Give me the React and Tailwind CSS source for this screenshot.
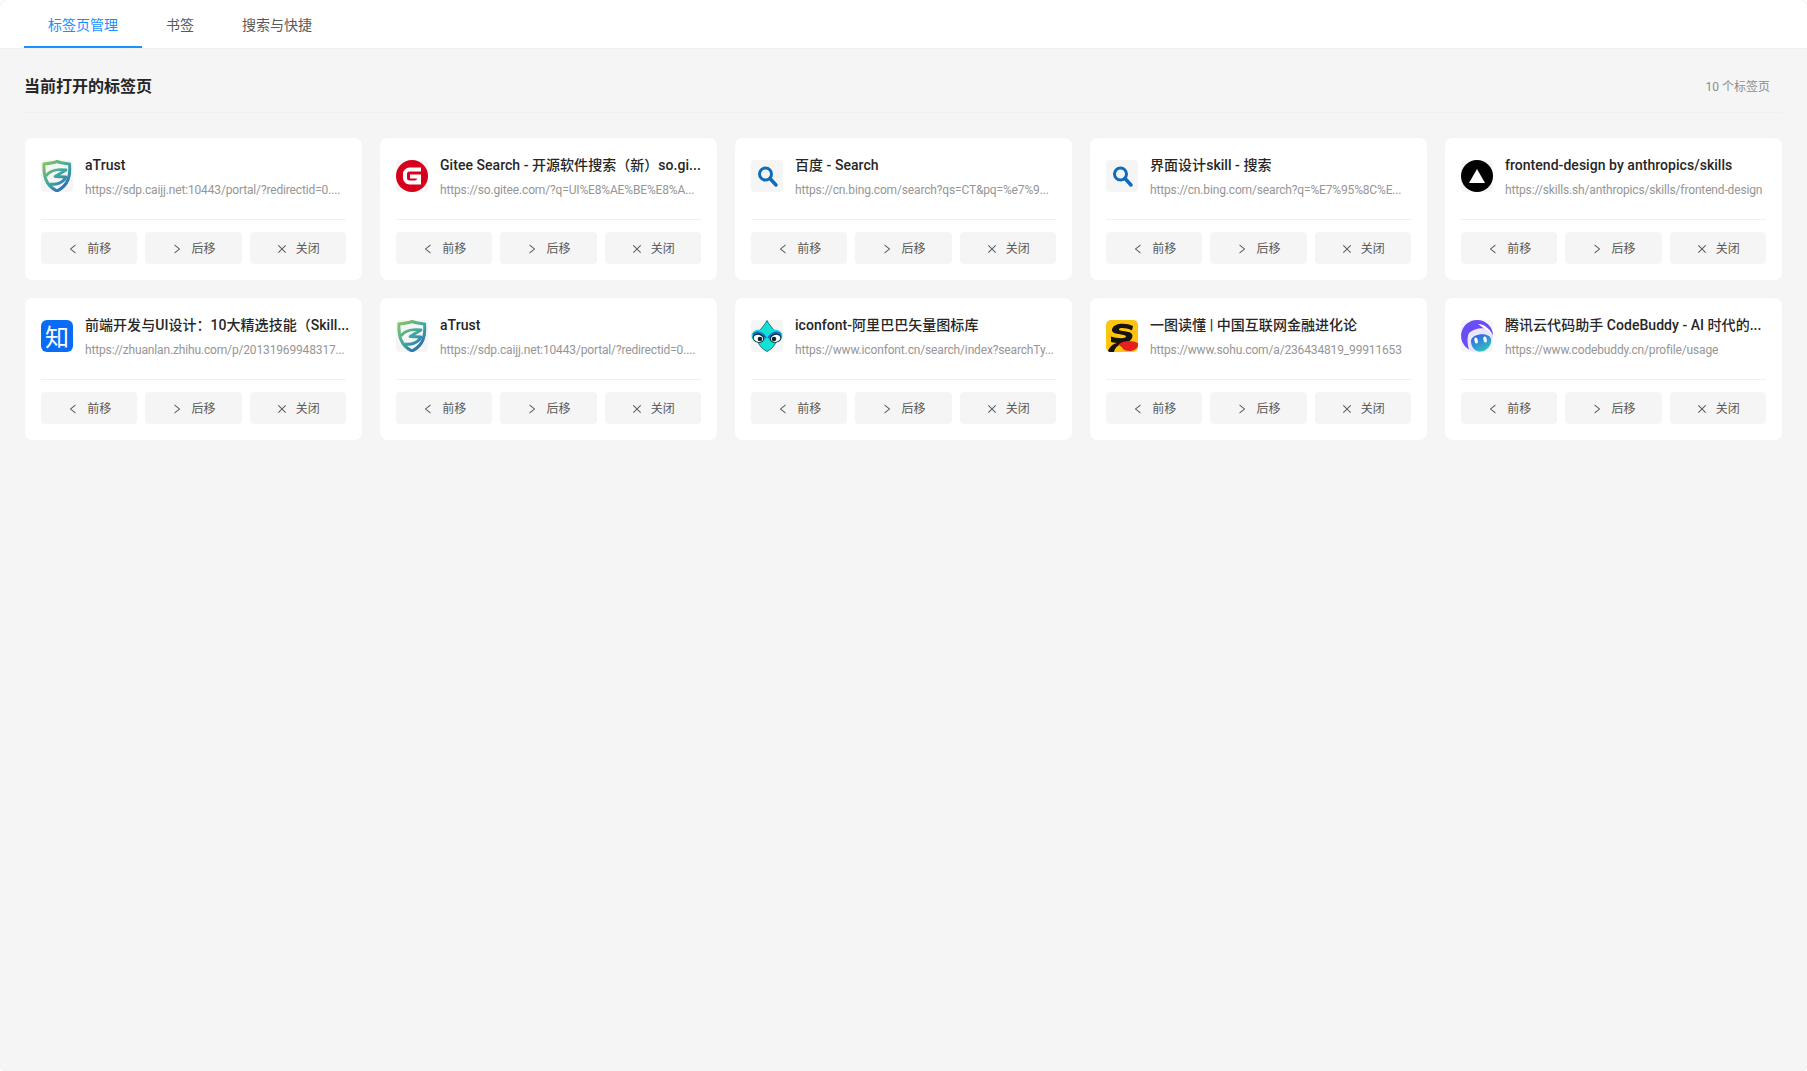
import React from 'react';
import { AiOutlineLeft, AiOutlineRight, AiOutlineClose } from 'react-icons/ai';

const ATrustIcon = ({ id }) => (
  <svg viewBox="0 0 32 32" className="w-8 h-8">
    <defs>
      <linearGradient id={id} gradientUnits="userSpaceOnUse" x1="3" y1="3" x2="27" y2="30">
        <stop offset="0" stopColor="#86c45f" />
        <stop offset="0.5" stopColor="#3ea9a0" />
        <stop offset="1" stopColor="#2a62b8" />
      </linearGradient>
    </defs>
    <path d="M16 1.500 C20 3 25 3.500 28.500 4 C29.500 15 28 25 16 31 C4 25 2.500 15 3 4 C7 3.500 12 3 16 1.500 Z" fill="none" stroke={`url(#${id})`} strokeWidth="3" />
    <path d="M5 16 C9 10 18 9 25 10 L14 16.500 L25 17 C22 23 15 25 9 24" fill="none" stroke={`url(#${id})`} strokeWidth="2.800" strokeLinejoin="round" />
  </svg>
);

const GiteeIcon = () => (
  <svg viewBox="0 0 32 32" className="w-8 h-8">
    <circle cx="16" cy="16" r="16" fill="#d6001c" />
    <path d="M7 14 A6.500 6.500 0 0 1 13.500 7.500 H25 V11.500 H13.500 A2.500 2.500 0 0 0 11 14 V18 A2.500 2.500 0 0 0 13.500 20.500 H19 A2 2 0 0 0 21 18.500 H14 V14.500 H25 V24.500 H13.500 A6.500 6.500 0 0 1 7 18 Z" fill="#fff" />
  </svg>
);

const SearchIcon = () => (
  <svg viewBox="0 0 32 32" className="w-8 h-8" fill="none">
    <circle cx="14.500" cy="14" r="6" stroke="#0f6cbd" strokeWidth="3" />
    <path d="M19 18.500 L25 25" stroke="#0f6cbd" strokeWidth="3.500" strokeLinecap="round" />
  </svg>
);

const SkillsIcon = () => (
  <svg viewBox="0 0 32 32" className="w-8 h-8">
    <circle cx="16" cy="16" r="16" fill="#000" />
    <path d="M16 9 L24 23 H8 Z" fill="#fff" />
  </svg>
);

const ZhihuIcon = () => (
  <div className="w-8 h-8 rounded-md bg-[#0a6cf5] text-white flex items-center justify-center text-[24px] leading-none font-normal font-['Noto_Sans_CJK_SC',sans-serif]">
    知
  </div>
);

const IconfontIcon = () => (
  <svg viewBox="0 0 32 32" className="w-8 h-8">
    <path d="M16 .5 C18 5 22 8 24 12 C28 18 25 27 16 31.500 C7 27 4 18 8 12 C10 8 14 5 16 .5 Z" fill="#14e0d8" stroke="#0b5c62" strokeWidth="0.800" />
    <ellipse cx="8" cy="16" rx="7.500" ry="6.500" fill="#14e0d8" />
    <ellipse cx="24" cy="16" rx="7.500" ry="6.500" fill="#14e0d8" />
    <ellipse cx="7.500" cy="18" rx="6" ry="4.800" fill="#10323a" transform="rotate(14 8 18)" />
    <ellipse cx="24.500" cy="18" rx="6" ry="4.800" fill="#10323a" transform="rotate(-14 24 18)" />
    <ellipse cx="7.500" cy="18.500" rx="4.800" ry="3.500" fill="#fff" transform="rotate(14 8 18)" />
    <ellipse cx="24.500" cy="18.500" rx="4.800" ry="3.500" fill="#fff" transform="rotate(-14 24 18)" />
    <circle cx="9" cy="19" r="2.300" fill="#10262c" />
    <circle cx="23" cy="19" r="2.300" fill="#10262c" />
    <path d="M2 14.500 C6 10.500 11 12 15 18 M30 14.500 C26 10.500 21 12 17 18" fill="none" stroke="#1c6ac8" strokeWidth="1.800" />
  </svg>
);

const SohuIcon = () => (
  <svg viewBox="0 0 32 32" className="w-8 h-8">
    <rect width="32" height="32" rx="5" fill="#fdc50f" />
    <path d="M27 6 C19 2 7 3 6 9.500 C5 15.500 20 13.500 20 16.500 C20 19 11 18.500 5 16.500 L5 22 C13 24 26 24 26.500 16 C27 10 13 12 13 9.500 C13 7.500 20 7.500 26 10.500 Z" fill="#17130f" />
    <path d="M2 31 C5 23 13 21 18 24 C13 24 9 27 8 32 H3 Z" fill="#17130f" />
    <path d="M12 24.500 C18 20 26 20 32 23 V26 C30 32 20 32 17 29 C16 27 14 25.500 12 24.500 Z" fill="#e61f1f" />
  </svg>
);

const CodeBuddyIcon = () => (
  <svg viewBox="0 0 32 32" className="w-8 h-8">
    <defs>
      <linearGradient id="buddy" x1="0.2" y1="0" x2="0.8" y2="1">
        <stop offset="0" stopColor="#2f5fe6" />
        <stop offset="1" stopColor="#35cbbd" />
      </linearGradient>
    </defs>
    <circle cx="16" cy="16" r="16" fill="#e9e4ff" />
    <path d="M16 0 A16 16 0 0 1 32 15 C27 7 17 6 8 13 C6 17 6 23 8 29.800 A16 16 0 0 1 16 0 Z" fill="#6a4df5" />
    <path d="M17 4 C23 4 29 9 31 14 C27 11 22 8 17 4 Z" fill="#fff" />
    <path d="M10 21 C10 14 28 11 30 19 C31 25 26 32 18 31.500 C13 31 10 26 10 21 Z" fill="url(#buddy)" />
    <ellipse cx="15" cy="20.500" rx="1.700" ry="3" fill="#fff" transform="rotate(-10 15 20)" />
    <ellipse cx="24" cy="19.500" rx="1.700" ry="3" fill="#fff" transform="rotate(-10 24 19)" />
  </svg>
);

const tabs = [
  { title: 'aTrust', url: 'https://sdp.caijj.net:10443/portal/?redirectid=0....', icon: <ATrustIcon id="shield-a" /> },
  { title: 'Gitee Search - 开源软件搜索（新）so.gi...', url: 'https://so.gitee.com/?q=UI%E8%AE%BE%E8%A...', icon: <GiteeIcon /> },
  { title: '百度 - Search', url: 'https://cn.bing.com/search?qs=CT&pq=%e7%9...', icon: <SearchIcon /> },
  { title: '界面设计skill - 搜索', url: 'https://cn.bing.com/search?q=%E7%95%8C%E...', icon: <SearchIcon /> },
  { title: 'frontend-design by anthropics/skills', url: 'https://skills.sh/anthropics/skills/frontend-design', icon: <SkillsIcon /> },
  { title: '前端开发与UI设计：10大精选技能（Skill...', url: 'https://zhuanlan.zhihu.com/p/20131969948317...', icon: <ZhihuIcon /> },
  { title: 'aTrust', url: 'https://sdp.caijj.net:10443/portal/?redirectid=0....', icon: <ATrustIcon id="shield-b" /> },
  { title: 'iconfont-阿里巴巴矢量图标库', url: 'https://www.iconfont.cn/search/index?searchTy...', icon: <IconfontIcon /> },
  { title: '一图读懂 | 中国互联网金融进化论', url: 'https://www.sohu.com/a/236434819_99911653', icon: <SohuIcon /> },
  { title: '腾讯云代码助手 CodeBuddy - AI 时代的...', url: 'https://www.codebuddy.cn/profile/usage', icon: <CodeBuddyIcon /> },
];

const TabCard = ({ tab }) => (
  <div className="bg-white border border-[#f4f4f4] rounded-lg px-4 pt-[22px] pb-4">
    <div className="flex gap-3 pb-[19px] border-b border-[#f0f0f0]">
      <div className="w-8 h-8 shrink-0 rounded bg-[#f5f5f5] overflow-hidden">{tab.icon}</div>
      <div className="min-w-0 flex-1 -mt-[6px]">
        <div className="text-sm leading-[22px] font-medium tracking-[0.04px] text-[#262626] whitespace-nowrap">{tab.title}</div>
        <div className="text-xs leading-5 mt-1 tracking-[-0.15px] text-[#969696] whitespace-nowrap">{tab.url}</div>
      </div>
    </div>
    <div className="grid grid-cols-3 gap-2 mt-3">
      <button className="h-8 pt-px rounded bg-[#f5f5f5] text-[#595959] text-xs flex items-center justify-center gap-2">
        <AiOutlineLeft size={12} />
        前移
      </button>
      <button className="h-8 pt-px rounded bg-[#f5f5f5] text-[#595959] text-xs flex items-center justify-center gap-2">
        <AiOutlineRight size={12} />
        后移
      </button>
      <button className="h-8 pt-px rounded bg-[#f5f5f5] text-[#595959] text-xs flex items-center justify-center gap-2">
        <AiOutlineClose size={12} />
        关闭
      </button>
    </div>
  </div>
);

export default function App() {
  return (
    <div className="h-screen bg-white">
      <div className="h-full rounded-lg overflow-hidden shadow-[0_0_0_1px_#f0f0f0] bg-[#f5f5f5] flex flex-col font-['Roboto','Noto_Sans_CJK_SC',sans-serif]">
        {/* Tabs */}
        <div className="h-[49px] shrink-0 bg-white border-b border-[#f0f0f0] px-6 flex">
          <button className="h-12 px-6 pt-1 text-sm text-[#1890ff] border-b-2 border-[#1890ff]">标签页管理</button>
          <button className="h-12 px-6 pt-[2px] text-sm text-[#595959]">书签</button>
          <button className="h-12 px-6 pt-[2px] text-sm text-[#595959]">搜索与快捷</button>
        </div>

        <div className="px-6">
          {/* Section header */}
          <div className="h-[64px] pt-[13px] flex items-center justify-between border-b border-[#f0f0f0] pr-[13px]">
            <h2 className="text-base font-semibold text-[#262626]">当前打开的标签页</h2>
            <span className="text-xs text-[#8c8c8c]">10 个标签页</span>
          </div>

          <div className="grid grid-cols-5 gap-4 mt-6">
            {tabs.map((tab, i) => (
              <TabCard key={i} tab={tab} />
            ))}
          </div>
        </div>
      </div>
    </div>
  );
}
